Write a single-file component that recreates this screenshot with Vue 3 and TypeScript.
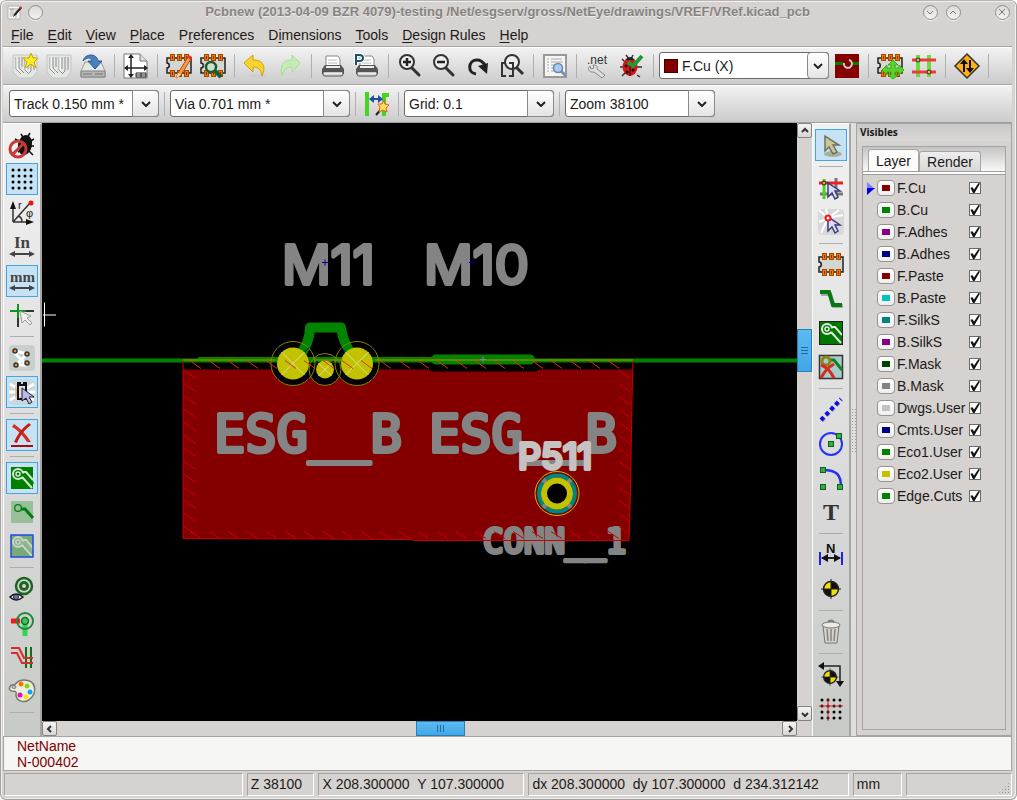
<script setup lang="ts">
import { ref } from 'vue'

interface Tool {
  icon: string
  label: string
  on?: boolean
}

const sheet = '<path d="M1 2h24v17l-5 6H7l-6-6z" fill="#e4e6e4" stroke="#c4c6c4"/><path d="M4 4v12l5 5M7 4v11l5 5M10 4v10M13 4v13l3 3M16 4v12M19 4v14l-3 3M22 4v13" fill="none" stroke="#8c908e"/><path d="M5 4v12l5 5M14 4v13l3 3" fill="none" stroke="#fff"/>'
const pads = '<g fill="#f57900" stroke="#a04800"><rect x="4.500" y="1.500" width="4" height="6"/><rect x="11.500" y="1.500" width="4" height="6"/><rect x="18.500" y="1.500" width="4" height="6"/><rect x="4.500" y="17.500" width="4" height="6"/><rect x="11.500" y="17.500" width="4" height="6"/><rect x="18.500" y="17.500" width="4" height="6"/></g><g fill="#7a3600"><path d="M6 3h1v3H6zM13 3h1v3h-1zM20 3h1v3h-1zM6 19h1v3H6zM13 19h1v3h-1zM20 19h1v3h-1z"/></g>'
const chip = '<path d="M1 5h24v15H1v-5c3 0 3-5 0-5z" fill="#d4d6d4" stroke="#222" stroke-width="1.500"/>' + pads
const lens = '<path d="M15 15l7 7" stroke="#333" stroke-width="3" stroke-linecap="round"/><circle cx="10" cy="9" r="7" fill="#eee" stroke="#333" stroke-width="2"/>'
const printer = '<path d="M6 3h12l2 3v8H6z" fill="#fff" stroke="#888"/><path d="M8 7h9M8 10h9" stroke="#bbb"/><path d="M2 16l3-4h16l3 4v5H2z" fill="#555"/><path d="M6 13h14v2H6z" fill="#eee"/><path d="M3 19h20v2q0 2-2 2H5q-2 0-2-2z" fill="#d8dad8" stroke="#555"/><path d="M4 20h18" stroke="#fff"/>'
const pointer = '<path d="M10 8v14l4-4 3 6 3-2-3-6h5z" fill="#dcdcf4" stroke="#3c3c78" stroke-width="1.500"/>'
const target = '<circle cx="13" cy="13" r="7.500" fill="#111"/><path d="M13 5.500V13H5.500A7.500 7.500 0 0 1 13 5.500zM13 20.500V13h7.500A7.500 7.500 0 0 1 13 20.500z" fill="#f2e000"/><circle cx="13" cy="13" r="7.500" fill="none" stroke="#222" stroke-width="1.500"/><path d="M13 3v20M3 13h20" stroke="#222"/>'
const zoneTrace = (bg: string, ink: string, gap: string): string =>
  `<rect x="2" y="2" width="22" height="22" fill="${bg}"/><path d="M13 7h4l7 8M9 13h5l9 10" fill="none" stroke="${ink}" stroke-width="2"/><circle cx="9" cy="9" r="5" fill="${gap}" stroke="${ink}" stroke-width="2"/><path d="M9 10h7l8 9" fill="none" stroke="${gap}" stroke-width="3"/><circle cx="9" cy="9" r="2" fill="${bg}" stroke="${ink}" stroke-width="1.500"/>`
const arrows = '<path d="M3 20h20" stroke="#444" stroke-width="2"/><path d="M0 20l6-3v6zM26 20l-6-3v6z" fill="#444"/>'
const dots = '<g fill="#000">' + [4, 10, 16, 22].map(y => [4, 10, 16, 22].map(x => `<circle cx="${x}" cy="${y}" r="1.500"/>`).join('')).join('') + '</g>'

const icons: Record<string, string> = {
  newBoard: sheet + '<path d="M19 0l2 5h5l-4 4 2 6-5-4-6 4 2-6-4-4h6z" fill="#ffee20" stroke="#c8a800"/>',
  openBoard: sheet,
  save: '<path d="M5 9h16l4 9v6H1v-6z" fill="#e4e6e4" stroke="#9a9c9a"/><path d="M1 18h24v6H1z" fill="#b4b6b4" stroke="#808280"/><path d="M3 21h9M15 21h8" stroke="#777"/><path d="M3 8C5 0 17 0 18 8h4l-7 8-7-8h4c-1-4-5-4-9 0z" fill="#4a80c0" stroke="#2c5890"/>',
  pageSet: '<path d="M1 1h16l7 7v17H1z" fill="#fff" stroke="#777"/><path d="M17 1v7h7" fill="#ddd" stroke="#777"/><path d="M8 2v22M2 15h22" stroke="#222" stroke-width="1.500"/><path d="M8 1l3 4H5zM8 25l3-4H5zM1 15l4-3v6zM25 15l-4-3v6z" fill="#222"/><path d="M13 20h10v4H13zM18 20v4M13 22h10" fill="#fff" stroke="#222"/>',
  moduleEdit: chip + '<path d="M10 25l2-5L22 4l3 2-10 16z" fill="#ff9a3c" stroke="#b05010"/><path d="M21 4l2-2 3 2-1 3z" fill="#e03030"/><path d="M10 25l2-5 3 2z" fill="#f4e0b0"/>',
  moduleView: chip + '<circle cx="11" cy="14" r="5" fill="#cde0d0" stroke="#1c5c30" stroke-width="2.500"/><path d="M15 18l6 6" stroke="#1c5c30" stroke-width="4"/>',
  undo: '<ellipse cx="15" cy="23" rx="9" ry="2" fill="#cccecc"/><path d="M10 2v5c11 0 13 7 9 16-1-7-4-9-9-9v5L1 10z" fill="#f8d42c" stroke="#d0a000"/>',
  redo: '<ellipse cx="11" cy="23" rx="9" ry="2" fill="#d4d6d4"/><path d="M15 2v5C5 7 3 14 5 23c2-7 5-9 10-9v5l8-9z" fill="#c4ecb4" stroke="#a8dc98"/>',
  print: printer,
  plot: printer + '<path d="M2 12V2h3q4 0 4 3t-4 3H2" fill="none" stroke="#fff" stroke-width="4"/><path d="M2 12V2h3q4 0 4 3t-4 3H2" fill="none" stroke="#1c5068" stroke-width="2"/>',
  zoomIn: lens + '<path d="M6 9h8M10 5v8" stroke="#222" stroke-width="2.500"/>',
  zoomOut: lens + '<path d="M6 9h8" stroke="#222" stroke-width="2.500"/>',
  redraw: '<path d="M11 21C2 20 3 7 12 7c4 0 6 2 8 5" fill="none" stroke="#222" stroke-width="3"/><path d="M13 13l10-3-1 11z" fill="#222"/>',
  zoomFit: '<path d="M17 14l7 7" stroke="#333" stroke-width="3"/><circle cx="13" cy="9" r="7" fill="#eee" stroke="#333" stroke-width="2"/><path d="M6 10H3v13h4M10 10h4v13h-4" fill="none" stroke="#333" stroke-width="2"/>',
  find: '<rect x="2" y="2" width="22" height="22" fill="#f4f4f2" stroke="#999" stroke-width="2"/><path d="M5 6h2M9 6h11M5 9h2M9 9h12M5 12h2M9 12h4M5 15h2M9 15h3M5 18h2M9 18h6" stroke="#aaa"/><path d="M19 18l5 5" stroke="#8090b0" stroke-width="3"/><circle cx="16" cy="15" r="4.500" fill="#a8ccf4" stroke="#6c84ac" stroke-width="1.500"/>',
  netlist: '<text x="2" y="11" font-family="Liberation Sans, Arial, sans-serif" font-size="12" fill="#333">.net</text><path d="M5 13c-3 3-1 7 4 6l8 6 3-3-8-6c1-3-1-4-4-4l1 3-3 1z" fill="#ddd" stroke="#888"/>',
  drc: '<path d="M3 6l4 4M1 14h5M3 23l5-5M18 22l3 2M17 14h6M7 2l3 4M14 2l-2 4" stroke="#333" stroke-width="1.500"/><ellipse cx="11" cy="14" rx="7.500" ry="9" fill="#d01818"/><path d="M11 8v15" stroke="#300"/><path d="M6 7q5-6 10 0z" fill="#222"/><g fill="#200"><circle cx="7" cy="13" r="1.500"/><circle cx="14" cy="17" r="1.500"/><circle cx="8" cy="19" r="1.500"/></g><path d="M9 9l5 4L23 3" fill="none" stroke="#1e9a30" stroke-width="4"/>',
  layerPair: '<rect x="1" y="1" width="24" height="24" fill="#840000"/><path d="M1 10.500h24" stroke="#008400" stroke-width="3"/><path d="M9 9h9v4H9z" fill="#840000"/><path d="M15 7a4 4 0 1 1-5 3" fill="none" stroke="#ccc" stroke-width="2"/>',
  autoPlace: chip + '<path d="M16 7l5 5h-3v3h4v-3l5 5-5 5v-3h-4v3h3l-5 4-5-4h3v-3h-4v3l-5-5 5-5v3h4v-3h-3z" fill="#56d42c" stroke="#38a818"/>',
  autoRoute: '<path d="M7 2v22M18 2v22" stroke="#6ade38" stroke-width="4"/><path d="M1 7h24M1 19h24" stroke="#ee3a3a" stroke-width="3"/><circle cx="7" cy="7" r="2" fill="#f0b060" stroke="#222"/><circle cx="18" cy="19" r="2" fill="#f0b060" stroke="#222"/>',
  router: '<path d="M13 1l12 12-12 12L1 13z" fill="#fcaf16" stroke="#333" stroke-width="1.500"/><path d="M10 19V9M16 7v10" stroke="#111" stroke-width="2"/><path d="M10 6l4 5H6zM16 20l4-5h-8z" fill="#111"/>',
  autoTrack: '<path d="M3 1v24" stroke="#44d61e" stroke-width="4"/><path d="M25 4h-5v21" fill="none" stroke="#44d61e" stroke-width="4"/><path d="M6 8h12" stroke="#204ca0" stroke-width="2"/><path d="M5 8l5-4v8zM19 8l-5-4v8z" fill="#204ca0"/><path d="M12 24l7-8" stroke="#222" stroke-width="2"/><path d="M20 9l1 4 4 1-3 3 1 4-4-2-4 2 1-5-2-3h4z" fill="#ffe060" stroke="#e46010"/>',
  drcOff: '<path d="M12 2l3 5M21 1l-3 5M6 7l6 3M25 7l-5 3M25 14h-5M24 23l-5-5M9 20l5-2" stroke="#111" stroke-width="1.500"/><ellipse cx="16" cy="13" rx="7" ry="10" fill="#111" transform="rotate(12 16 13)"/><circle cx="9" cy="17" r="8" fill="none" stroke="#c83838" stroke-width="3"/><path d="M4 22L14 12" stroke="#c83838" stroke-width="3"/>',
  grid: dots,
  polar: '<path d="M4 22L21 3M4 22V5M4 22h17M13 22q0-5-4-6" fill="none" stroke="#333" stroke-width="1.500"/><path d="M4 1l3 8H1zM25 22l-8-3v6z" fill="#111"/><circle cx="22" cy="3" r="2.500" fill="#f01010"/><text x="9" y="9" font-family="Liberation Sans, Arial, sans-serif" font-size="11" fill="#222">r</text><text x="17" y="17" font-family="Liberation Sans, Arial, sans-serif" font-size="11" fill="#222">φ</text>',
  inch: '<text x="5" y="14" font-family="Liberation Serif, Times New Roman, serif" font-weight="bold" font-size="17" fill="#444">In</text>' + arrows,
  mm: '<text x="1" y="14" font-family="Liberation Serif, Times New Roman, serif" font-weight="bold" font-size="15" fill="#444">mm</text>' + arrows,
  cursor: '<path d="M9 2v23M1 9h24" stroke="#333" stroke-width="2"/><path d="M9 9h8M9 2v14M1 9h8" stroke="#10941c" stroke-width="2"/><path d="M11 9l2 12 3-3 5 5 2-2-5-5 4-2z" fill="#eee" stroke="#999"/>',
  ratsnest: '<rect width="26" height="26" rx="4" fill="#c8d0ce"/><path d="M5 7l13 14M7 20L20 7M5 6l14 3M8 20h10" stroke="#fff" stroke-width="3"/><g fill="#f58a28" stroke="#333" stroke-width="1.500"><circle cx="6" cy="6" r="2"/><circle cx="18" cy="9" r="2"/><circle cx="7" cy="20" r="2"/><circle cx="18" cy="18" r="2"/></g>',
  modRatsnest: '<rect width="26" height="26" rx="4" fill="#c8d8e0"/><path d="M1 5l7 4M0 13h7M1 21l7-4M25 5l-7 4M26 13h-7M25 21l-7-4" stroke="#fff" stroke-width="3"/><path d="M9 4h2v2h4V4h2v16H9z" fill="#ddd" stroke="#111" stroke-width="2"/><path d="M7 7v12" stroke="#f58a28"/><path d="M13 9v13l4-3 3 6 3-2-3-5h5z" fill="#b8b8ec" stroke="#222"/>',
  autoDel: '<path d="M5 2c6 4 12 10 17 18h-4C14 14 9 8 3 5z" fill="#d82c20"/><path d="M20 1c-7 5-12 12-15 19l3 1c3-7 7-13 14-18z" fill="#c81c18"/><path d="M2 24h22" stroke="#b00808" stroke-width="2"/>',
  zoneFill: zoneTrace('#008000', '#d4e8d4', '#008000'),
  zoneNone: zoneTrace('#98c098', '#98c098', '#007c10'),
  zoneOutline: zoneTrace('#78aa78', '#c8d4c8', '#90b890') + '<rect x="2" y="2" width="22" height="22" fill="none" stroke="#1c4ce0" stroke-width="1.500"/>',
  padSketch: '<circle cx="15" cy="10" r="8" fill="none" stroke="#1c6420" stroke-width="2.500"/><circle cx="15" cy="10" r="3.500" fill="none" stroke="#1c6420" stroke-width="3"/><path d="M1 21q6-6 13 0-7 6-13 0z" fill="#fff" stroke="#111" stroke-width="1.500"/><circle cx="7" cy="21" r="2.500" fill="#6878b8" stroke="#223"/>',
  viaSketch: '<path d="M2 11h9" stroke="#f01818" stroke-width="5"/><path d="M16 13v13" stroke="#30d848" stroke-width="5"/><circle cx="16" cy="11" r="8" fill="none" stroke="#20863c" stroke-width="2"/><circle cx="16" cy="11" r="3.500" fill="#38c850" stroke="#187028" stroke-width="1.500"/>',
  trackSketch: '<path d="M17 3v21M22 3v21" stroke="#107010" stroke-width="2"/><path d="M2 4h8l5 10h9M2 9h6l5 10h11" fill="none" stroke="#d82c2c" stroke-width="2"/>',
  palette: '<path d="M15 2c13 0 13 13 6 19-5 5-14 2-14-4 1-4-1-4-4-4-5-1-2-7 2-6 2 0 2-5 10-5z" fill="#eeeee0" stroke="#77776c" stroke-width="1.500"/><ellipse cx="5" cy="9" rx="2" ry="1.500" fill="#ccc" stroke="#777"/><circle cx="12" cy="6" r="2.500" fill="#f57900"/><circle cx="18" cy="8" r="2.500" fill="#8ad41c"/><circle cx="21" cy="14" r="2.500" fill="#18a0ec"/><circle cx="11" cy="17" r="2.500" fill="#e410b4"/><circle cx="17" cy="19" r="2.500" fill="#fce014"/>',
  select: '<ellipse cx="15" cy="22" rx="9" ry="3" fill="#a8b098"/><path d="M7 4v15l4-4 4 7 4-2-4-7h6z" fill="#c8c898" stroke="#70705c" stroke-width="1.500"/>',
  netHigh: '<path d="M18 3v21M2 19h23" stroke="#777" stroke-width="3"/><path d="M6 4v20" stroke="#44d61e" stroke-width="3"/><path d="M1 8h24" stroke="#f02020" stroke-width="3"/>' + pointer + '<circle cx="6" cy="8" r="2" fill="#e8a040" stroke="#222"/>',
  localRats: '<rect width="26" height="26" rx="4" fill="#d8d8d8"/><path d="M10 9L1 1M10 9L8 0M10 9L21 1M10 9l15-3M10 9L1 13M10 9L3 24" stroke="#fff" stroke-width="2"/>' + pointer + '<circle cx="10" cy="9" r="2.500" fill="#fff" stroke="#e81818" stroke-width="2"/>',
  addModule: chip,
  addTrack: '<path d="M3 8h9l4 12h9" fill="none" stroke="#aaa" stroke-width="4"/><path d="M2 6h9l4 13h9" fill="none" stroke="#087814" stroke-width="4"/>',
  addZone: zoneTrace('#007800', '#e4ece4', '#007800') + '<rect x="1.500" y="1.500" width="23" height="23" fill="none" stroke="#222"/>',
  keepout: '<rect x="1.500" y="1.500" width="23" height="23" fill="#a8ccc8" stroke="#333" stroke-width="1.500"/><path d="M12 6h4l8 10" fill="none" stroke="#108020" stroke-width="3"/><circle cx="8" cy="7" r="4" fill="none" stroke="#8c8418" stroke-width="3"/><path d="M3 11c6 2 10 7 13 13M16 10C9 14 6 18 3 24" fill="none" stroke="#d42c20" stroke-width="3"/>',
  addLine: '<path d="M4 24L24 3" stroke="#999" stroke-width="3" stroke-dasharray="4 3"/><path d="M3 23L23 2" stroke="#0c0cf0" stroke-width="4" stroke-dasharray="4 3"/>',
  addCircle: '<circle cx="13" cy="13" r="11" fill="none" stroke="#2434f0" stroke-width="2"/><g fill="#30b040" stroke="#145820"><rect x="10.500" y="10.500" width="5" height="5"/><rect x="18.500" y="2.500" width="5" height="5"/></g>',
  addArc: '<path d="M5 5c14 0 18 5 18 17" fill="none" stroke="#2434f0" stroke-width="2.500"/><g fill="#30b040" stroke="#145820"><rect x="2.500" y="2.500" width="5" height="5"/><rect x="2.500" y="19.500" width="5" height="5"/><rect x="19.500" y="19.500" width="5" height="5"/></g>',
  addText: '<text x="5" y="21" font-family="Liberation Serif, Times New Roman, serif" font-weight="bold" font-size="24" fill="#333">T</text>',
  dimension: '<text x="8" y="11" font-family="Liberation Sans, Arial, sans-serif" font-weight="bold" font-size="13" fill="#111">N</text><path d="M2 10v13M24 10v13" stroke="#2020f0" stroke-width="2"/><path d="M4 16h18" stroke="#222" stroke-width="2"/><path d="M3 16l7-4v8zM23 16l-7-4v8z" fill="#111"/>',
  target,
  trash: '<path d="M5 7h16l-2 17H7z" fill="#d4d4ce" stroke="#77776f"/><path d="M9 10l1 12M13 10v12M17 10l-1 12" stroke="#85857e" stroke-width="1.500"/><ellipse cx="13" cy="6" rx="9" ry="3" fill="#eaeae6" stroke="#77776f"/><path d="M10 3q3-3 6 0" fill="none" stroke="#77776f" stroke-width="2"/>',
  originSet: '<g transform="translate(1 4) scale(.85)">' + target + '</g><path d="M2 4h20v18" fill="none" stroke="#222" stroke-width="1.500"/><path d="M0 4l6-4v8zM22 25l-4-6h8z" fill="#111"/>',
  gridOrigin: dots + '<path d="M10 2v23M1 10h24" stroke="#e02020"/>'
}

const t = (icon: string, label: string, on = false): Tool => ({ icon, label, on })

const fileGroups: Tool[][] = [
  [t('newBoard', 'New board'), t('openBoard', 'Open board'), t('save', 'Save board')],
  [t('pageSet', 'Page settings')],
  [t('moduleEdit', 'Module editor'), t('moduleView', 'Module viewer')],
  [t('undo', 'Undo'), t('redo', 'Redo')],
  [t('print', 'Print board'), t('plot', 'Plot')],
  [t('zoomIn', 'Zoom in'), t('zoomOut', 'Zoom out'), t('redraw', 'Redraw view'), t('zoomFit', 'Zoom auto')],
  [t('find', 'Find')],
  [t('netlist', 'Read netlist'), t('drc', 'Design rules check')]
]
const modeGroups: Tool[][] = [
  [t('autoPlace', 'Module mode'), t('autoRoute', 'Track mode')],
  [t('router', 'FreeRoute')]
]
const leftGroups = ref<Tool[][]>([
  [t('drcOff', 'Enable design rule checking'), t('grid', 'Grid', true), t('polar', 'Polar coordinates'), t('inch', 'Inches'), t('mm', 'Millimeters', true), t('cursor', 'Cursor shape')],
  [t('ratsnest', 'Board ratsnest'), t('modRatsnest', 'Module ratsnest', true)],
  [t('autoDel', 'Automatic track deletion', true)],
  [t('zoneFill', 'Filled zones', true), t('zoneNone', 'Unfilled zones'), t('zoneOutline', 'Zone outlines')],
  [t('padSketch', 'Pads in outline'), t('viaSketch', 'Vias in outline'), t('trackSketch', 'Tracks in outline'), t('palette', 'High contrast')]
])
const rightGroups: Tool[][] = [
  [t('select', 'Select')],
  [t('netHigh', 'Highlight net'), t('localRats', 'Local ratsnest')],
  [t('addModule', 'Add module'), t('addTrack', 'Add track'), t('addZone', 'Add zone'), t('keepout', 'Add keepout')],
  [t('addLine', 'Add line'), t('addCircle', 'Add circle'), t('addArc', 'Add arc'), t('addText', 'Add text')],
  [t('dimension', 'Add dimension'), t('target', 'Add target')],
  [t('trash', 'Delete')],
  [t('originSet', 'Drill origin'), t('gridOrigin', 'Grid origin')]
]
const active = ref('select')

const menus = [['', 'F', 'ile'], ['', 'E', 'dit'], ['', 'V', 'iew'], ['', 'P', 'lace'], ['P', 'r', 'eferences'], ['D', 'i', 'mensions'], ['', 'T', 'ools'], ['', 'D', 'esign Rules'], ['', 'H', 'elp']]

const layers = ref([
  { name: 'F.Cu', color: '#840000', shown: true },
  { name: 'B.Cu', color: '#008400', shown: true },
  { name: 'F.Adhes', color: '#840084', shown: true },
  { name: 'B.Adhes', color: '#000084', shown: true },
  { name: 'F.Paste', color: '#840000', shown: true },
  { name: 'B.Paste', color: '#00c2c2', shown: true },
  { name: 'F.SilkS', color: '#008484', shown: true },
  { name: 'B.SilkS', color: '#840084', shown: true },
  { name: 'F.Mask', color: '#004200', shown: true },
  { name: 'B.Mask', color: '#848484', shown: true },
  { name: 'Dwgs.User', color: '#c2c2c2', shown: true },
  { name: 'Cmts.User', color: '#000084', shown: true },
  { name: 'Eco1.User', color: '#008400', shown: true },
  { name: 'Eco2.User', color: '#c2c200', shown: true },
  { name: 'Edge.Cuts', color: '#008400', shown: true }
])
const current = ref('F.Cu')
const tab = ref('Layer')

const series = (from: number, to: number, step: number): number[] => {
  const out: number[] = []
  for (let v = from; v <= to; v += step) out.push(v)
  return out
}
const hatchTop = series(190, 622, 19).map(x => `M${x} 361l11 8`).join('')
const hatchSide = series(371, 530, 13).map(y => `M184 ${y}l12 8M619 ${y}l11 8`).join('')
const hatchBottom = series(190, 615, 19).map(x => `M${x} 532l11 7`).join('')
const vias = [
  { x: 293, y: 364, r: 16, ring: 22 },
  { x: 325, y: 370, r: 9, ring: 16 },
  { x: 357, y: 364, r: 16, ring: 22 }
]
const status = ['', 'Z 38100', 'X 208.300000  Y 107.300000', 'dx 208.300000  dy 107.300000  d 234.312142', 'mm', '']
</script>

<template>
  <div class="window">
    <header class="titlebar">
      <div class="title-side">
        <svg class="app-icon" viewBox="0 0 15 15" aria-hidden="true">
          <path d="M1 1h12v13H1z" fill="#f4f4f4" stroke="#b4b4b4" />
          <path d="M4 3v9M6 3v8M2 4h9M9 5v8" stroke="#aaa" />
          <path d="M6 12l1-3 6-7 2 1-6 7z" fill="#222" />
          <path d="M12 3l2-2 1 2-1 1z" fill="#d03020" />
        </svg>
        <button class="orb" aria-label="Window menu"></button>
      </div>
      <h1>Pcbnew (2013-04-09 BZR 4079)-testing /Net/esgserv/gross/NetEye/drawings/VREF/VRef.kicad_pcb</h1>
      <div class="title-side end">
        <button class="orb" aria-label="Minimize"><svg viewBox="0 0 9 9"><path d="M1 3l3 3 3-3" /></svg></button>
        <button class="orb" aria-label="Maximize"><svg viewBox="0 0 9 9"><path d="M1 6l3-3 3 3" /></svg></button>
        <button class="orb close" aria-label="Close"><svg viewBox="0 0 9 9"><path d="M1 1l6 6M7 1L1 7" /></svg></button>
      </div>
    </header>

    <nav class="menubar">
      <button v-for="m in menus" :key="m.join('')">{{ m[0] }}<u>{{ m[1] }}</u>{{ m[2] }}</button>
    </nav>

    <div class="toolbar">
      <template v-for="(g, i) in fileGroups" :key="i">
        <button v-for="b in g" :key="b.icon" class="tool" :aria-label="b.label">
          <svg viewBox="0 0 26 26" v-html="icons[b.icon]"></svg>
        </button>
        <span class="sep"></span>
      </template>
      <div class="combo layer-combo">
        <span class="combo-swatch"></span>
        <select aria-label="Active layer"><option>F.Cu (X)</option><option>B.Cu</option></select>
        <span class="drop"><svg viewBox="0 0 10 6"><path d="M1 1l4 4 4-4" /></svg></span>
      </div>
      <button class="tool" aria-label="Layer pair"><svg viewBox="0 0 26 26" v-html="icons.layerPair"></svg></button>
      <span class="sep"></span>
      <template v-for="(g, i) in modeGroups" :key="i">
        <button v-for="b in g" :key="b.icon" class="tool" :aria-label="b.label">
          <svg viewBox="0 0 26 26" v-html="icons[b.icon]"></svg>
        </button>
        <span class="sep"></span>
      </template>
    </div>

    <div class="toolbar">
      <div class="combo">
        <select aria-label="Track width"><option>Track 0.150 mm *</option></select>
        <span class="drop"><svg viewBox="0 0 10 6"><path d="M1 1l4 4 4-4" /></svg></span>
      </div>
      <span class="sep"></span>
      <div class="combo via-combo">
        <select aria-label="Via size"><option>Via 0.701 mm *</option></select>
        <span class="drop"><svg viewBox="0 0 10 6"><path d="M1 1l4 4 4-4" /></svg></span>
      </div>
      <span class="sep"></span>
      <button class="tool" aria-label="Auto track width"><svg viewBox="0 0 26 26" v-html="icons.autoTrack"></svg></button>
      <span class="sep"></span>
      <div class="combo">
        <select aria-label="Grid"><option>Grid: 0.1</option></select>
        <span class="drop"><svg viewBox="0 0 10 6"><path d="M1 1l4 4 4-4" /></svg></span>
      </div>
      <span class="sep"></span>
      <div class="combo">
        <select aria-label="Zoom"><option>Zoom 38100</option></select>
        <span class="drop"><svg viewBox="0 0 10 6"><path d="M1 1l4 4 4-4" /></svg></span>
      </div>
    </div>

    <main class="workspace">
      <div class="sidebar left">
        <template v-for="(g, i) in leftGroups" :key="i">
          <button v-for="b in g" :key="b.icon" class="tool" :class="{ on: b.on }" :aria-pressed="b.on" :aria-label="b.label" @click="b.on = !b.on">
            <svg viewBox="0 0 26 26" v-html="icons[b.icon]"></svg>
          </button>
          <span class="sep"></span>
        </template>
      </div>

      <div class="view">
        <svg class="board" viewBox="42 124 755 597" role="img" aria-label="Board">
          <path d="M183 370H428l4 2h104l4-2h93l-1 30-1 60-1 53-1 28H413v-1l-230-1z" fill="#840000" />
          <g fill="#000"><circle v-for="v in vias" :key="v.x" :cx="v.x" :cy="v.y" :r="v.ring" /></g>
          <path d="M42 361H797" stroke="#008400" stroke-width="4" />
          <path d="M198 359H434" stroke="#008400" stroke-width="3" />
          <path d="M184 364H632V369H184z" fill="#000" />
          <path d="M436 360H530" stroke="#008400" stroke-width="10" stroke-linecap="round" />
          <path d="M298 358Q310 344 310 328H341Q343 344 354 358" fill="none" stroke="#008400" stroke-width="10" stroke-linejoin="round" />
          <g v-for="v in vias" :key="v.x">
            <circle :cx="v.x" :cy="v.y" :r="v.ring" fill="none" stroke="#848400" />
            <path :d="`M${v.x - v.r} ${v.y - v.r}L${v.x + v.r} ${v.y + v.r}M${v.x + v.r} ${v.y - v.r}L${v.x - v.r} ${v.y + v.r}`" stroke="#000084" />
            <circle :cx="v.x" :cy="v.y" :r="v.r" fill="#c2c200" />
            <path :d="`M${v.x} ${v.y}m-${v.r * 0.7} -${v.r * 0.7}l${v.r * 1.4} ${v.r * 1.4}m0 -${v.r * 1.4}l-${v.r * 1.4} ${v.r * 1.4}`" stroke="#e0e0a0" />
          </g>
          <g class="stroke-text">
            <text x="282" y="284" class="ref-large">M11</text>
            <text x="424" y="284" class="ref-large">M10</text>
            <text x="214" y="452" class="value-large">ESG__B</text>
            <text x="429" y="452" class="value-large">ESG__B</text>
            <text x="483" y="553" class="value-small">CONN__1</text>
            <text x="518" y="469" class="ref-small">P511</text>
          </g>
          <path d="M325 260v6M322 263h6M472 260v6M469 263h6" stroke="#000084" />
          <path d="M183 361v178l230 1v1h216l1-28 1-53 1-60 1-39" fill="none" stroke="#c80000" />
          <path :d="hatchSide + hatchBottom" stroke="#c80000" fill="none" />
          <path :d="hatchTop" stroke="#e03010" fill="none" />
          <path d="M183 360.500H276M314 360.500H343M375 360.500H633" stroke="#c88400" />
          <path d="M483 357v6M480 360h6" stroke="#8484a4" />
          <circle cx="557" cy="494" r="22" fill="#840000" stroke="#c2c200" />
          <circle cx="557" cy="494" r="20" fill="#111" />
          <circle cx="557" cy="494" r="18" fill="none" stroke="#008484" stroke-width="4" />
          <path d="M543 480l28 28M571 480l-28 28" stroke="#848484" stroke-width="4" />
          <circle cx="557" cy="494" r="13" fill="#000" stroke="#c2c200" stroke-width="6" />
          <path d="M43 315.500H56M44.500 303V327" stroke="#fff" />
        </svg>
        <div class="scroll vertical">
          <button class="arrow" aria-label="Scroll up"><svg viewBox="0 0 8 8"><path d="M1 5l3-3 3 3" /></svg></button>
          <div class="track"><div class="before"></div><div class="thumb"><i></i></div><div class="after"></div></div>
          <button class="arrow" aria-label="Scroll down"><svg viewBox="0 0 8 8"><path d="M1 3l3 3 3-3" /></svg></button>
        </div>
        <div class="scroll horizontal">
          <button class="arrow" aria-label="Scroll left"><svg viewBox="0 0 8 8"><path d="M5 1L2 4l3 3" /></svg></button>
          <div class="track"><div class="before"></div><div class="thumb"><i></i></div><div class="after"></div></div>
          <button class="arrow" aria-label="Scroll right"><svg viewBox="0 0 8 8"><path d="M3 1l3 3-3 3" /></svg></button>
        </div>
      </div>

      <div class="sidebar right">
        <template v-for="(g, i) in rightGroups" :key="i">
          <span v-if="i" class="sep"></span>
          <button v-for="b in g" :key="b.icon" class="tool" :class="{ on: active === b.icon }" :aria-label="b.label" @click="active = b.icon">
            <svg viewBox="0 0 26 26" v-html="icons[b.icon]"></svg>
          </button>
        </template>
      </div>
      <div class="sash"><i></i></div>

      <aside class="panel">
        <h2>Visibles</h2>
        <div class="notebook">
          <div class="tabs" role="tablist">
            <button v-for="n in ['Layer', 'Render']" :key="n" role="tab" :aria-selected="tab === n" :class="{ chosen: tab === n }" @click="tab = n">{{ n }}</button>
          </div>
          <ul>
            <li v-for="l in layers" :key="l.name">
              <span class="marker"><svg v-if="current === l.name" viewBox="0 0 8 13"><path d="M0 0l8 7H0z" fill="#8080ff" /><path d="M0 6h8l-8 7z" fill="#0000f0" /></svg></span>
              <button class="swatch" :aria-label="'Color of ' + l.name" @click="current = l.name"><span :style="{ background: l.color }"></span></button>
              <label :for="'show-' + l.name">{{ l.name }}</label>
              <input :id="'show-' + l.name" v-model="l.shown" type="checkbox">
            </li>
          </ul>
        </div>
      </aside>
    </main>

    <section class="message">
      <div>NetName</div>
      <div>N-000402</div>
    </section>
    <footer class="statusbar">
      <div v-for="(s, i) in status" :key="i">{{ s }}</div>
    </footer>
  </div>
</template>

<style>
body { margin: 0; background: #fff; }
</style>

<style scoped>
* { box-sizing: border-box; }
button, select, input { font: inherit; color: inherit; margin: 0; padding: 0; }
button { background: none; border: 0; }
.window {
  display: flex;
  flex-direction: column;
  min-height: 100vh;
  padding: 0 4px 3px 2px;
  border: 1px solid #a4a2a0;
  border-top-color: #b8b6b4;
  border-radius: 6px;
  background: #d6d2d0;
  color: #1c1a18;
  font: 14px/16px "Liberation Sans", Arial, sans-serif;
  box-shadow: inset 1px 1px #f2f0ee, inset -1px -1px #f2f0ee;
}
.titlebar { display: grid; grid-template-columns: 1fr auto 1fr; align-items: center; height: 22px; }
.title-side { display: flex; align-items: center; gap: 6px; padding-left: 4px; }
.title-side.end { justify-content: flex-end; gap: 8px; padding: 0 2px 0 0; }
.app-icon { width: 15px; height: 15px; }
.orb { display: grid; place-items: center; width: 15px; height: 15px; border: 1px solid #8f8d8b; border-radius: 50%; background: linear-gradient(#dddbd9, #f4f2f0); box-shadow: 0 1px #f4f4f4; }
.orb.close { margin-left: 26px; }
.orb svg { width: 9px; height: 9px; fill: none; stroke: #777; }
h1 { margin: 0; color: #878380; font: bold 13px/16px "Liberation Sans", Arial, sans-serif; text-shadow: 0 1px #eceae8; white-space: nowrap; }
.menubar { display: flex; gap: 14px; height: 23px; padding-left: 8px; align-items: center; }
.menubar button { white-space: nowrap; }
.menubar u { text-underline-offset: 2px; }
.toolbar { display: flex; align-items: center; gap: 2px; height: 38px; padding-left: 6px; border-top: 1px solid #a8a6a4; background: linear-gradient(#f3f3f3, #cbcbcb); box-shadow: inset 0 1px #fff; }
.tool { display: grid; place-items: center; flex: none; width: 32px; height: 32px; border: 1px solid transparent; }
.tool svg { width: 26px; height: 26px; overflow: visible; }
.tool.on { border: 1px solid #45a5e2; background: #c5e3f5; }
.toolbar .sep { flex: none; width: 7px; height: 24px; background: linear-gradient(90deg, transparent 3px, #b0b0b0 3px, #b0b0b0 4px, transparent 4px); }
.combo { position: relative; display: flex; align-items: center; width: 150px; height: 27px; border: 1px solid #6c6a68; border-radius: 3px; background: #fff; }
.via-combo { width: 180px; }
.layer-combo { width: 170px; }
.combo select { flex: 1; min-width: 0; height: 25px; padding: 0 28px 0 4px; border: 0; background: transparent; appearance: none; outline: 0; }
.combo-swatch { width: 14px; height: 14px; margin-left: 4px; border: 1px solid #400; background: #840000; }
.drop { position: absolute; top: -1px; right: -1px; bottom: -1px; display: grid; place-items: center; width: 27px; border: 1px solid #8c8a88; border-radius: 0 4px 4px 0; background: linear-gradient(#fff, #e4e4e4); pointer-events: none; }
.layer-combo .drop { width: 22px; border-radius: 4px; }
.drop svg { width: 10px; height: 6px; fill: none; stroke: #222; stroke-width: 2; }
.workspace { display: flex; flex: 1; min-height: 0; border-top: 1px solid #a0a0a0; }
.sidebar { display: flex; flex: none; flex-direction: column; align-items: center; gap: 2px; width: 39px; padding-top: 5px; border: 1px solid #fbfbfb; border-right: 2px solid #a6a6a4; border-bottom: 0; background: linear-gradient(#f1f1f1, #c8cac8); }
.sidebar .sep { flex: none; width: 24px; height: 7px; background: linear-gradient(transparent 3px, #adadab 3px, #adadab 4px, transparent 4px); }
.view { display: grid; flex: 1; grid-template: 1fr 15px / 1fr 15px; min-width: 0; }
.board { width: 100%; height: 100%; min-height: 0; background: #000; }
.stroke-text text { fill: #848484; stroke: #848484; stroke-width: 4px; stroke-linejoin: round; }
.stroke-text .ref-large { font: 54px Inter, "Liberation Sans", sans-serif; }
.stroke-text .value-large { font: 52px "DejaVu Sans Mono", "Liberation Mono", monospace; }
.stroke-text .value-small { font: 34px "DejaVu Sans Mono", "Liberation Mono", monospace; }
.stroke-text .ref-small { font: 36px Inter, "Liberation Sans", sans-serif; fill: #c6c2c2; stroke: #c6c2c2; }
.scroll { display: flex; background: #d6d2d0; }
.vertical { flex-direction: column; grid-column: 2; grid-row: 1; }
.horizontal { grid-column: 1; grid-row: 2; }
.arrow { display: grid; place-items: center; flex: none; width: 15px; height: 15px; border: 1px solid #858381; border-radius: 2px; background: linear-gradient(#f4f4f4, #d8d6d4); }
.arrow svg { width: 8px; height: 8px; fill: none; stroke: #333; stroke-width: 2; }
.track { display: flex; flex: 1; flex-direction: inherit; }
.vertical .before { flex: 191; }
.vertical .after { flex: 333; }
.horizontal .before { flex: 359; }
.horizontal .after { flex: 317; }
.thumb { display: grid; place-items: center; border: 1px solid #2680b8; background: linear-gradient(#5cbaf4, #42a6e6); }
.vertical .thumb { height: 43px; }
.horizontal .thumb { width: 49px; }
.thumb i { width: 7px; height: 7px; background: repeating-linear-gradient(#256c9c 0 1px, transparent 1px 3px); }
.horizontal .thumb i { background: repeating-linear-gradient(90deg, #256c9c 0 1px, transparent 1px 3px); }
.sash { display: grid; place-items: center; flex: none; width: 5px; background: #dededc; }
.sash i { width: 5px; height: 44px; background: radial-gradient(#999 1px, transparent 1px) 0 0 / 3px 3px; }
.panel { flex: none; width: 156px; padding: 0 5px 5px; border: 1px solid #a6a4a2; background: #d6d2d0; }
h2 { margin: 0 -5px 5px; padding-left: 3px; height: 17px; background: linear-gradient(#c8c8c6, #dad8d6); font: bold 10px/16px "Open Sans", sans-serif; }
.notebook { height: calc(100% - 22px); border: 1px solid #a6a4a2; }
.tabs { display: flex; align-items: flex-end; height: 28px; padding: 0 0 3px 5px; border-bottom: 1px solid #a09e9c; background: linear-gradient(#c4c4c4, #f8f8f8 24px, #a09e9c 24px, #a09e9c 25px, #fff 25px); }
.tabs button { height: 20px; padding: 0 7px; border: 1px solid #a6a4a2; border-bottom: 0; border-radius: 3px 3px 0 0; background: linear-gradient(#eee, #d8d8d8); }
.tabs .chosen { height: 22px; background: #fbfbfb; }
ul { margin: 2px 0 0; padding: 0; list-style: none; }
li { display: flex; align-items: center; height: 22px; padding-left: 4px; }
.marker { width: 10px; height: 13px; }
.marker svg { display: block; width: 8px; height: 13px; }
.swatch { display: grid; place-items: center; width: 18px; height: 16px; border: 1px solid #959391; border-radius: 4px; background: linear-gradient(#fff, #eee); }
.swatch span { width: 8px; height: 6px; }
label { width: 72px; padding-left: 2px; white-space: nowrap; }
input[type="checkbox"] { appearance: none; width: 12px; height: 12px; margin-left: 2px; border: 1px solid #6c6a68; background: #fff; }
input[type="checkbox"]:checked::before { content: ""; display: block; width: 10px; height: 10px; background: #111; clip-path: polygon(5% 50%, 22% 40%, 40% 65%, 85% 0, 100% 5%, 45% 100%, 30% 100%); }
.message { height: 35px; padding: 1px 13px; border: 1px solid #a6a4a2; background: #f6f6f4; color: #800000; }
.statusbar { display: grid; grid-template-columns: 240fr 68fr 207fr 322fr 49fr 107fr; gap: 4px; padding: 2px 0 0 1px; }
.statusbar div { position: relative; height: 23px; padding: 0 3px; border: 1px solid; border-color: #a6a4a2 #fff #fff #a6a4a2; line-height: 21px; white-space: pre; overflow: hidden; }
.statusbar div:last-child::after { content: ""; position: absolute; right: 1px; bottom: 1px; width: 12px; height: 12px; background: radial-gradient(#8e8c8a 1px, transparent 1px) 0 0 / 3px 3px; clip-path: polygon(100% 0, 100% 100%, 0 100%); }
</style>
